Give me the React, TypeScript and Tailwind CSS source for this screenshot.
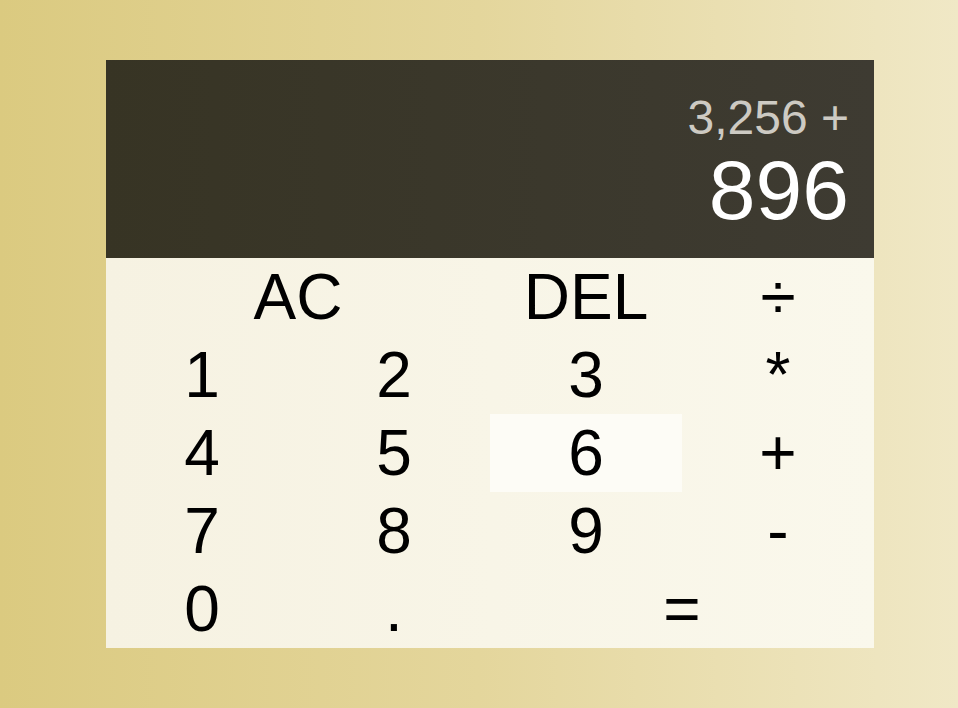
import React from "react";

const keys: { label: string; span?: boolean; active?: boolean }[] = [
  { label: "AC", span: true },
  { label: "DEL" },
  { label: "÷" },
  { label: "1" },
  { label: "2" },
  { label: "3" },
  { label: "*" },
  { label: "4" },
  { label: "5" },
  { label: "6", active: true },
  { label: "+" },
  { label: "7" },
  { label: "8" },
  { label: "9" },
  { label: "-" },
  { label: "0" },
  { label: "." },
  { label: "=", span: true },
];

export default function App() {
  return (
    <div
      className="w-full h-[708px] flex justify-start pl-[106px] pt-[60px] bg-gradient-to-r from-[#dbca80] via-[#e4d69c] to-[#f0e8c6]"
      style={{ fontFamily: '"Liberation Sans", Arial, sans-serif' }}
    >
      <div className="w-[768px] h-[588px] flex flex-col">
        <div className="h-[198px] flex flex-col justify-end items-end pl-6 pr-[25px] pb-[21px] bg-gradient-to-r from-[#373424] to-[#3e3b32]">
          <div className="text-[48px] leading-[50px] text-[#cdcac3]">3,256 +</div>
          <div className="text-[84px] leading-[94px] text-white">896</div>
        </div>
        <div className="flex-1 grid grid-cols-4 grid-rows-5 bg-gradient-to-r from-[#f6f2e2] to-[#faf8ec]">
          {keys.map((k) => (
            <button
              key={k.label}
              className={
                (k.span ? "col-span-2 " : "") +
                (k.active ? "bg-[#fdfcf6] " : "bg-transparent ") +
                "flex items-center justify-center text-[64px] leading-none text-black cursor-pointer"
              }
            >
              {k.label}
            </button>
          ))}
        </div>
      </div>
    </div>
  );
}
